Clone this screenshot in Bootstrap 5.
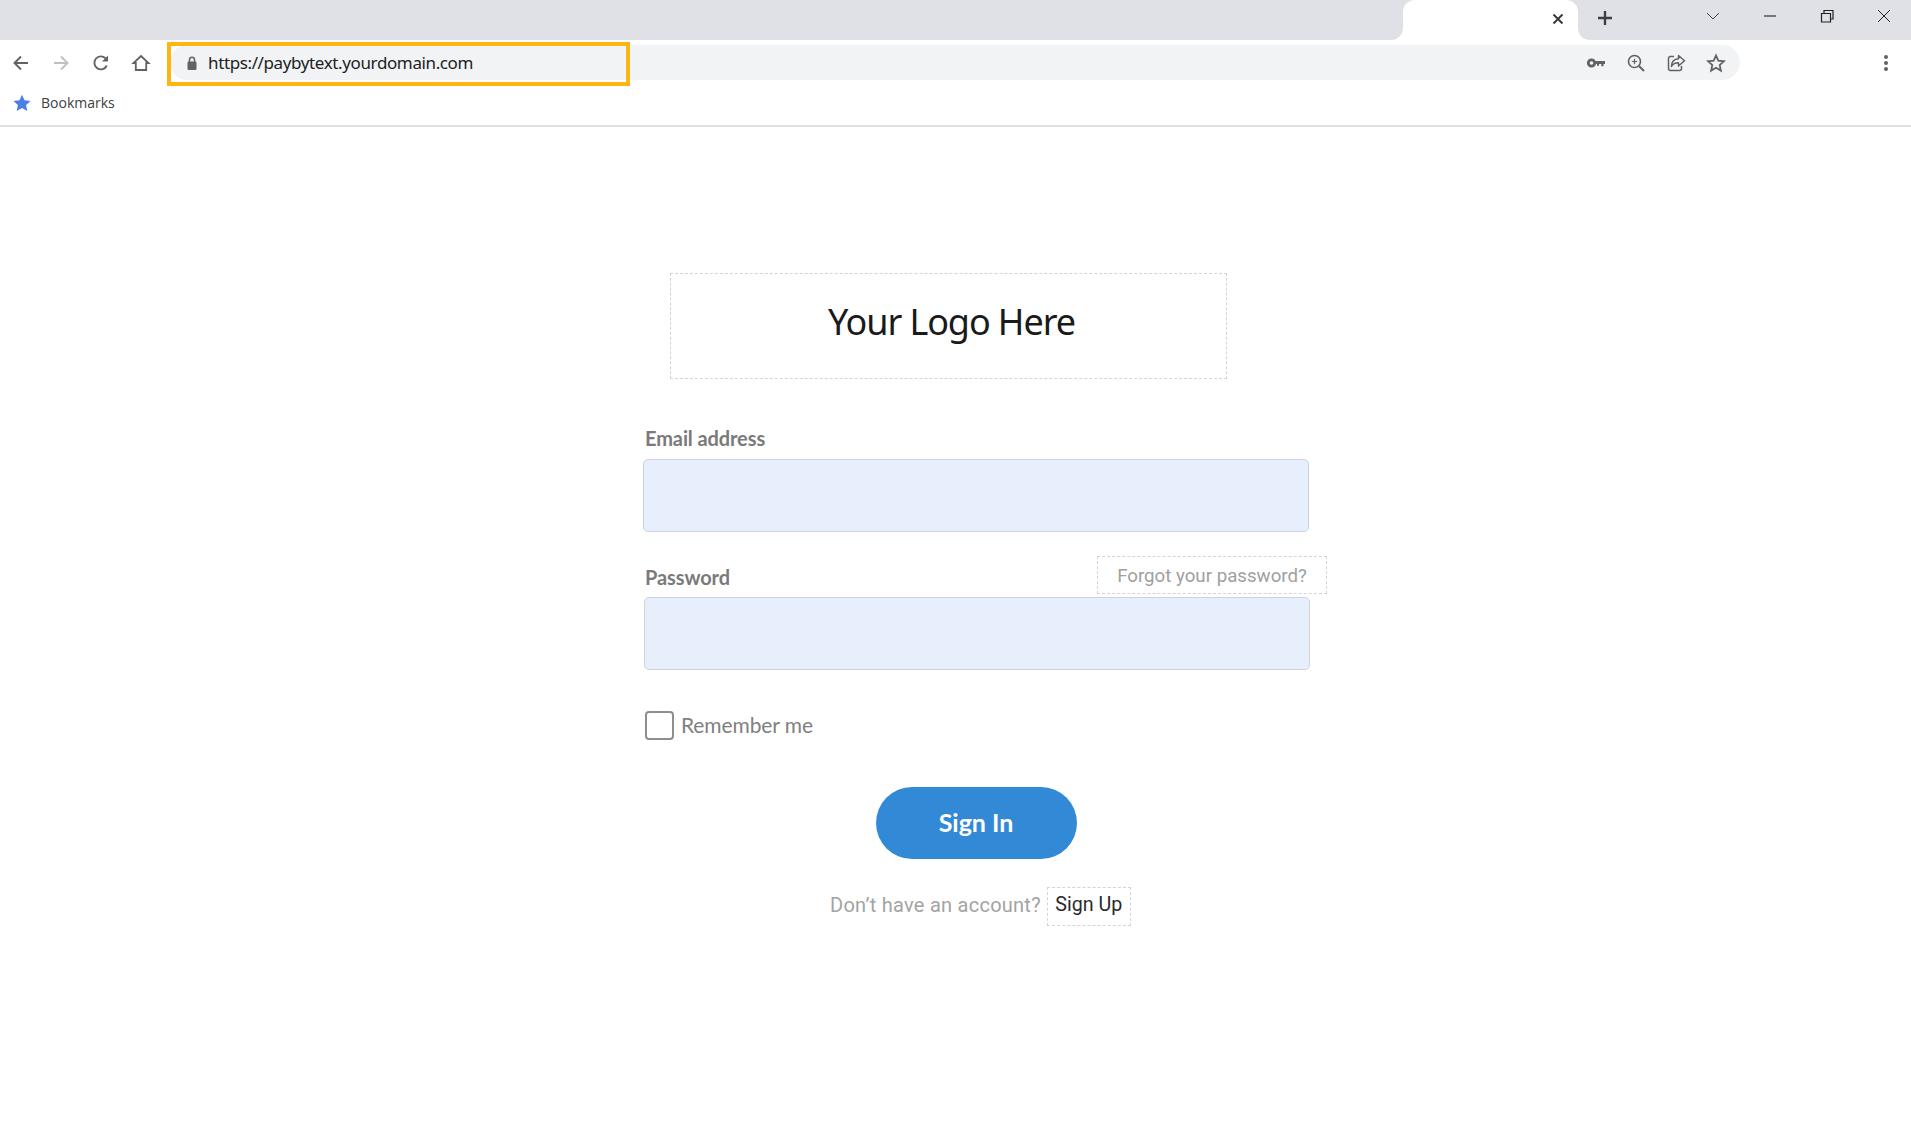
<!DOCTYPE html>
<html lang="en">
<head>
<meta charset="utf-8">
<title>Sign in</title>
<link href="https://cdn.jsdelivr.net/npm/bootstrap@5.3.0/dist/css/bootstrap.min.css" rel="stylesheet">
<style>
html,body{height:100%}
body{background:#fff;overflow:hidden;font-family:"Lato","Liberation Sans",sans-serif}
.chrome-strip{height:40px;background:linear-gradient(#dfe1e6 50%,#fff 50%)}
.strip-left{width:1403px;background:#dfe1e6;border-bottom-right-radius:12px}
.strip-tab{width:175px;background:#fff;border-radius:12px 12px 0 0;padding:0 13px 3px 0}
.strip-right{flex:1;background:#dfe1e6;border-bottom-left-radius:12px;padding-left:17px}
.ml-chev{margin-left:90px}.ml-ctl{margin-left:41px}
.chrome-bar{height:47px;padding-top:5px;padding-bottom:7px;padding-left:11px}
.nav-ic{width:20px;height:20px;margin-right:20px;flex:none}
.omni{width:1570px;height:35px;margin-left:-1px;background:#f1f3f4;border-radius:18px;padding-left:15px}
.omni-url{font-family:"Noto Sans",sans-serif;font-size:17px;letter-spacing:-.38px;color:#202124;margin-left:9px}
.omni-mark{left:-3px;top:-3px;width:463px;height:44px;border:4px solid #ffb511;pointer-events:none}
.omni-ic{width:20px;height:20px;margin-left:20px}
.omni-tools{padding-right:14px}
.kebab{margin-left:136px}
.book-row{height:40px;border-bottom:2px solid #dedfe0;padding:0 0 7px 13px}
.book-txt{font-family:"Open Sans",sans-serif;font-size:14px;color:#3c4043;margin-left:10px}
.page-wrap{padding-left:643px;padding-top:146px}
.login{width:666px}
.logo-slot{width:557px;height:106px;margin-left:27px;border:1px dashed #d4d4d4;padding-top:23px;padding-left:6px;margin-bottom:48px}
.logo-txt{font-family:"Noto Sans",sans-serif;font-size:36px;line-height:50px;letter-spacing:-1.1px;color:#1a1a1a}
.fld-lbl{font-weight:700;font-size:20px;letter-spacing:-.1px;color:#7a7a7a;margin:0 0 0 2px;line-height:22px}
.fld-input{height:73px;background:#e8effc;border:1px solid #cdd3dc;border-radius:5px}
.fld-input:focus{background:#e8effc}
.row-email{margin-bottom:24px}
.lbl-mail{padding-bottom:7px}
.pw-head{height:38px;margin-left:1px;margin-right:-1px}
.pw-head .fld-lbl{margin:0 0 6px 1px}
.forgot{width:230px;height:38px;margin-right:-17px;padding-top:2px;border:1px dashed #d4d4d4;font-family:"Roboto",sans-serif;font-size:18.7px;color:#a0a0a0;text-decoration:none}
.pw-box{margin:3px -1px 41px 1px}
.rem-box{width:29px;height:29px;margin:0 7px 0 2px;border:2px solid #8e8e8e;border-radius:4px;flex:none}
.rem-txt{font-size:21px;color:#808080;letter-spacing:-.1px;margin-top:-1px}
.rem-row{height:29px;margin-bottom:47px}
.signin{width:201px;height:72px;background:#328ad6;border:0;font-weight:700;font-size:25px;color:#fff}
.signin:hover{background:#328ad6;color:#fff}
.foot-row{margin-top:28px;padding-left:187px}
.foot-txt{font-family:"Roboto",sans-serif;font-size:20px;color:#a3a3a3;letter-spacing:.25px;margin-bottom:3px}
.signup{width:84px;height:39px;margin-left:6px;padding-bottom:3px;border:1px dashed #d4d4d4;font-family:"Roboto",sans-serif;font-size:19.7px;color:#2b2b2b;text-decoration:none}
</style>
</head>
<body>
<div class="chrome-strip d-flex">
  <div class="strip-left"></div>
  <div class="strip-tab d-flex align-items-center justify-content-end">
    <svg width="14" height="14" viewBox="0 0 14 14"><path d="M2.5 2.5l9 9M11.500 2.500l-9 9" stroke="#33363b" stroke-width="1.900" fill="none"/></svg>
  </div>
  <div class="strip-right d-flex align-items-center">
    <svg class="mb-1" width="20" height="20" viewBox="0 0 20 20"><path d="M10 3v14M3 10h14" stroke="#3c4043" stroke-width="2.400" fill="none"/></svg>
    <svg class="ml-chev mb-2" width="16" height="10" viewBox="0 0 16 10"><path d="M2 2l6 6 6-6" stroke="#44474c" stroke-width="1" fill="none"/></svg>
    <svg class="ml-ctl mb-2" width="16" height="10" viewBox="0 0 16 10"><path d="M2 5h12" stroke="#222" stroke-width="1.100" fill="none"/></svg>
    <svg class="ml-ctl mb-2" width="16" height="16" viewBox="0 0 16 16"><path d="M2.500 5.500h9v8.500h-9zM5 5.500V2.500h9v8.500h-2.500" stroke="#222" stroke-width="1.200" fill="none"/></svg>
    <svg class="ml-ctl mb-2" width="16" height="16" viewBox="0 0 16 16"><path d="M2 2l12 12M14 2L2 14" stroke="#222" stroke-width="1" fill="none"/></svg>
  </div>
</div>

<div class="chrome-bar d-flex align-items-center">
  <svg class="nav-ic" viewBox="0 0 20 20"><path d="M17 10H4M10 3.500L3.500 10l6.500 6.500" stroke="#5f6368" stroke-width="1.900" fill="none"/></svg>
  <svg class="nav-ic" viewBox="0 0 20 20"><path d="M3 10h13M10 3.500l6.500 6.500-6.500 6.500" stroke="#bdc0c4" stroke-width="1.900" fill="none"/></svg>
  <svg class="nav-ic" viewBox="0 0 20 20"><path d="M15.800 12.500A6.500 6.500 0 1 1 14.600 5.400" stroke="#5f6368" stroke-width="1.900" fill="none"/><path d="M17 2.500v6h-6z" fill="#5f6368"/></svg>
  <svg class="nav-ic" viewBox="0 0 20 20"><path d="M10 3l7.500 7h-2.300v7H4.800v-7H2.500z" stroke="#5f6368" stroke-width="1.800" fill="none" stroke-linejoin="miter"/></svg>
  <div class="omni position-relative d-flex align-items-center">
    <svg width="14" height="16" viewBox="0 0 14 16"><path d="M4.500 7V4.800a2.500 2.500 0 0 1 5 0V7" stroke="#5f6368" stroke-width="1.500" fill="none"/><rect x="2.500" y="6.500" width="9" height="8.500" rx="1.200" fill="#5f6368"/></svg>
    <span class="omni-url">https://paybytext.yourdomain.com</span>
    <div class="omni-mark position-absolute"></div>
    <div class="omni-tools ms-auto d-flex align-items-center">
      <svg class="omni-ic" viewBox="0 0 20 20"><circle cx="5.500" cy="10" r="3.200" fill="none" stroke="#5f6368" stroke-width="2.800"/><path d="M9 8h10v3h-1.500v2.300h-2.200V11H13v1.800h-2V11H9z" fill="#5f6368"/></svg>
      <svg class="omni-ic" viewBox="0 0 20 20"><circle cx="8.500" cy="8.500" r="6" fill="none" stroke="#5f6368" stroke-width="1.600"/><path d="M13 13l5 5" stroke="#5f6368" stroke-width="2"/><path d="M8.500 5.800v5.400M5.800 8.500h5.400" stroke="#5f6368" stroke-width="1.200"/></svg>
      <svg class="omni-ic" viewBox="0 0 20 20"><path d="M8 3.500H4.500a2 2 0 0 0-2 2v10a2 2 0 0 0 2 2h9a2 2 0 0 0 2-2V13" fill="none" stroke="#5f6368" stroke-width="1.500"/><path d="M12.500 2.500l6 5.200-6 5.300V9.800c-3.500 0-5.500 1-7 3.700 0-4.500 2.500-7.500 7-7.800z" fill="none" stroke="#5f6368" stroke-width="1.500" stroke-linejoin="round"/></svg>
      <svg class="omni-ic" viewBox="0 0 20 20"><path d="M10 2.500l2.300 5.200 5.600.6-4.200 3.800 1.200 5.500L10 14.800l-4.900 2.800 1.200-5.500L2.100 8.300l5.600-.6z" fill="none" stroke="#5f6368" stroke-width="1.800" stroke-linejoin="miter"/></svg>
    </div>
  </div>
  <svg class="kebab" width="20" height="20" viewBox="0 0 20 20"><circle cx="10" cy="4" r="2" fill="#5f6368"/><circle cx="10" cy="10" r="2" fill="#5f6368"/><circle cx="10" cy="16" r="2" fill="#5f6368"/></svg>
</div>

<div class="book-row d-flex align-items-center">
  <svg width="18" height="18" viewBox="0 0 18 18"><path d="M9 .8l2.500 5.500 6 .7-4.400 4.100 1.200 5.900L9 14.100 3.700 17l1.200-5.900L.5 7l6-.7z" fill="#4a7fe8"/></svg>
  <span class="book-txt">Bookmarks</span>
</div>

<main class="page-wrap">
  <form class="login">
    <div class="logo-slot text-center"><span class="logo-txt">Your Logo Here</span></div>
    <div class="row-email">
      <div class="lbl-mail"><label class="fld-lbl form-label">Email address</label></div>
      <input class="form-control fld-input" type="email" aria-label="Email address">
    </div>
    <div class="pw-head d-flex justify-content-between align-items-end">
      <label class="fld-lbl form-label">Password</label>
      <a class="forgot d-flex align-items-center justify-content-center" href="#">Forgot your password?</a>
    </div>
    <div class="pw-box"><input class="form-control fld-input" type="password" aria-label="Password"></div>
    <div class="rem-row d-flex align-items-center">
      <span class="rem-box"></span>
      <span class="rem-txt">Remember me</span>
    </div>
    <div class="text-center"><button class="btn signin rounded-pill" type="button">Sign In</button></div>
    <div class="foot-row d-flex align-items-center">
      <span class="foot-txt">Don’t have an account?</span>
      <a class="signup d-flex align-items-center justify-content-center" href="#">Sign Up</a>
    </div>
  </form>
</main>
<script src="https://cdn.jsdelivr.net/npm/bootstrap@5.3.0/dist/js/bootstrap.bundle.min.js"></script>
</body>
</html>
